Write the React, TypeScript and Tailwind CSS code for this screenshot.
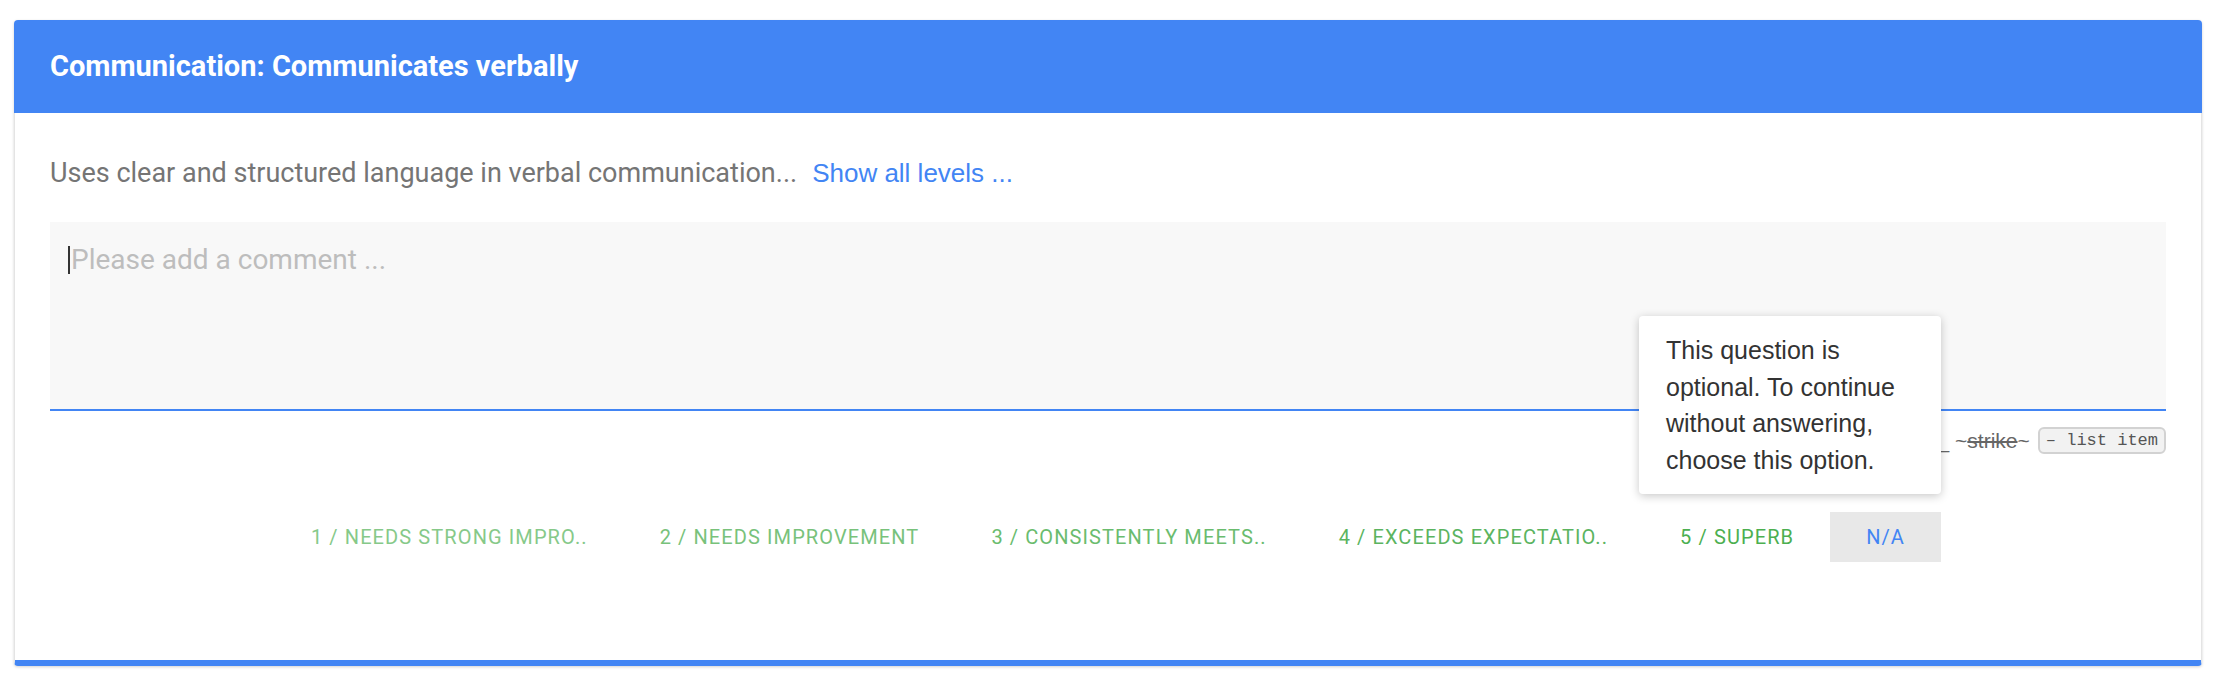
const levels = [
  { label: "1 / NEEDS STRONG IMPRO..", color: "text-[#86c989]" },
  { label: "2 / NEEDS IMPROVEMENT", color: "text-[#78c27b]" },
  { label: "3 / CONSISTENTLY MEETS..", color: "text-[#6abc6e]" },
  { label: "4 / EXCEEDS EXPECTATIO..", color: "text-[#5bb45f]" },
  { label: "5 / SUPERB", color: "text-[#4caf50]" },
];

function Tooltip() {
  return (
    <div className="absolute bottom-full right-0 mb-[18px] w-[302px] rounded-[4px] bg-white px-[27px] py-[16px] text-[25px] leading-[36.5px] tracking-normal text-[#333] shadow-[0_2px_10px_rgba(0,0,0,0.22)] font-['Liberation_Sans',Arial,sans-serif] z-10">
      This question is optional. To continue without answering, choose this option.
    </div>
  );
}

function RatingRow() {
  return (
    <div className="mt-[58px] flex justify-center font-['Roboto',sans-serif] text-[20px] tracking-[1.1px]">
      {levels.map((l) => (
        <button key={l.label} className={`h-[50px] px-[36px] flex items-center whitespace-nowrap ${l.color}`}>
          {l.label}
        </button>
      ))}
      <div className="relative">
        <button className="h-[50px] px-[36px] flex items-center bg-[#e8e8e8] text-[#4285f4]">N/A</button>
        <Tooltip />
      </div>
    </div>
  );
}

export default function App() {
  return (
    <div className="min-h-screen bg-white pt-[20px] pl-[14px] pr-[26px]">
      <div className="rounded-[4px] shadow-[0_1px_3px_rgba(0,0,0,0.18)]">
        <div className="h-[93px] rounded-t-[4px] bg-[#4285f4] px-[36px] flex items-center">
          <h2 className="text-[29px] font-bold text-white font-['Roboto',sans-serif]">
            Communication: Communicates verbally
          </h2>
        </div>
        <div className="border-x border-[#e4e4e4] border-b-[6px] border-b-[#4285f4] rounded-b-[4px] bg-white px-[35px] pt-[44px] pb-[98px]">
          <p className="h-[32px] flex items-center whitespace-nowrap">
            <span className="text-[27px] text-[#757575] font-['Roboto',sans-serif]">
              Uses clear and structured language in verbal communication...
            </span>
            <a className="ml-[15px] text-[26px] text-[#4285f4] font-['Liberation_Sans',Arial,sans-serif]">
              Show all levels ...
            </a>
          </p>
          <div className="mt-[33px] h-[189px] bg-[#f8f8f8] border-b-2 border-[#4285f4] pl-[18px] pt-[22px]">
            <div className="flex items-center h-[32px] font-['Roboto',sans-serif] text-[28px] text-[#bdbdbd]">
              <span className="w-[2px] h-[28px] bg-[#333] mr-[1px]" />
              Please add a comment ...
            </div>
          </div>
          <div className="mt-[16px] h-[27px] flex items-center justify-end gap-[8px] text-[#666] font-['Liberation_Sans',Arial,sans-serif] text-[21px]">
            <span>
              **bold** _italic_ ~<s>strike</s>~
            </span>
            <code className="h-[27px] flex items-center rounded-[6px] border-2 border-[#d2d2d2] bg-[#f2f2f2] px-[6px] text-[17px] text-[#555] font-['Liberation_Mono',monospace]">
              – list item
            </code>
          </div>
          <RatingRow />
        </div>
      </div>
    </div>
  );
}
